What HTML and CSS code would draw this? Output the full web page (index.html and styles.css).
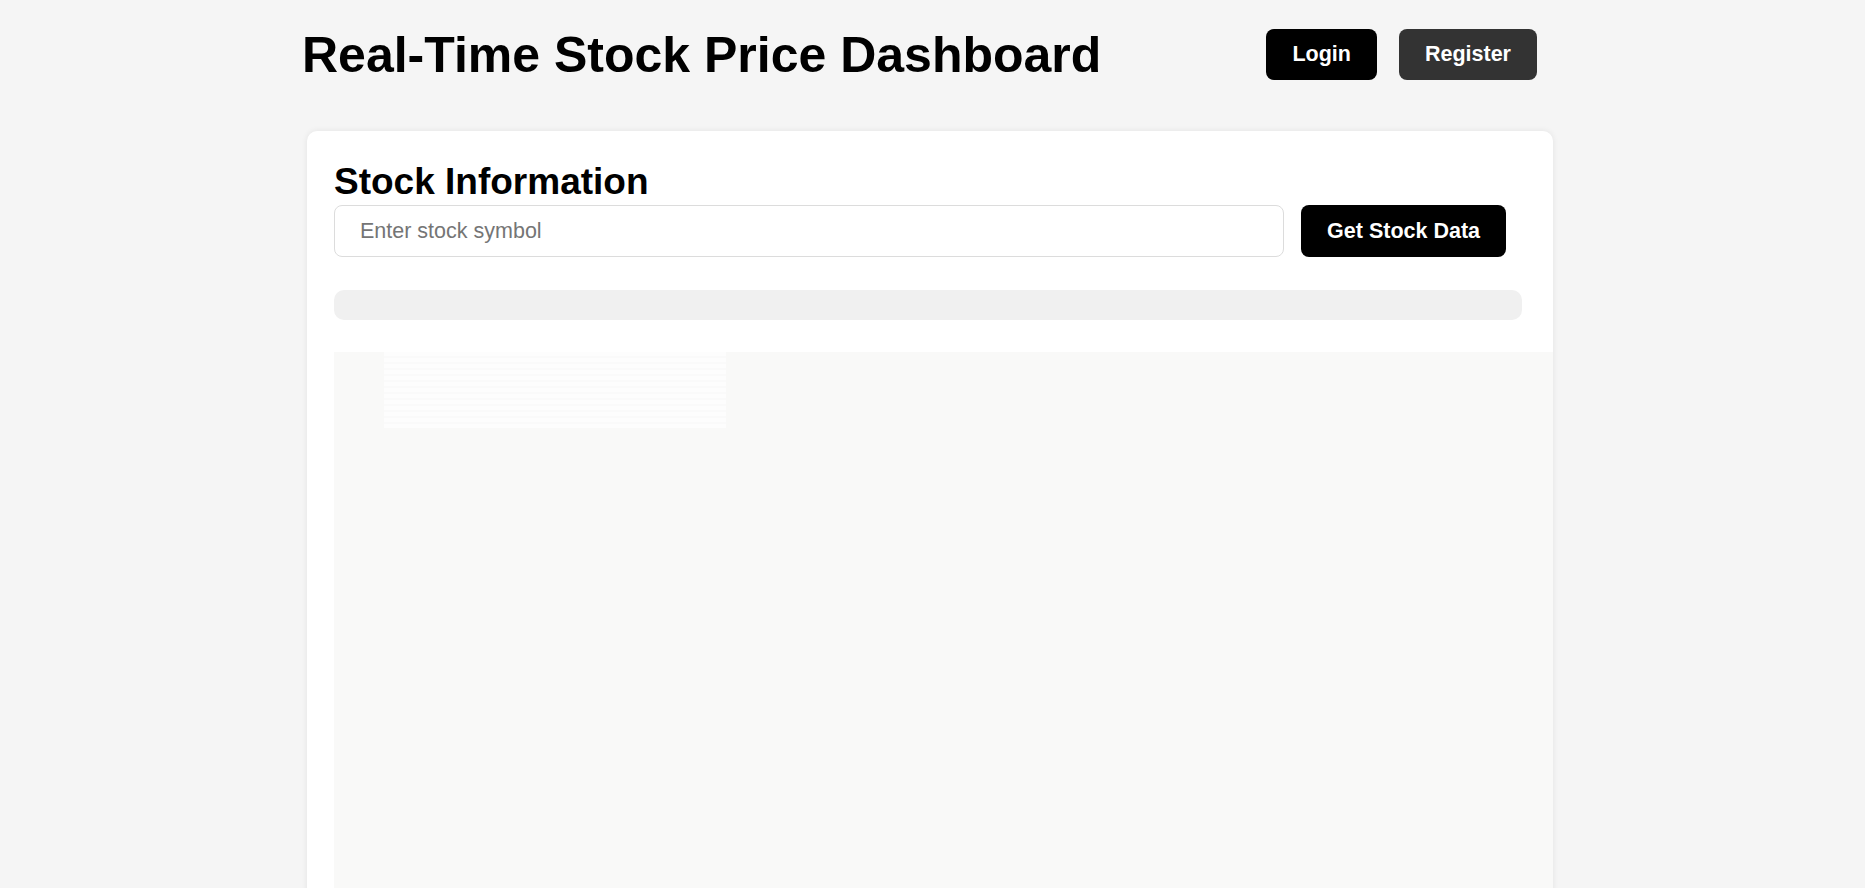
FILE: index.html
```html
<!DOCTYPE html>
<html lang="en">
<head>
<meta charset="utf-8">
<title>Real-Time Stock Price Dashboard</title>
<link rel="stylesheet" href="styles.css">
</head>
<body>
<div class="page">
  <header class="header">
    <h1 class="title">Real-Time Stock Price Dashboard</h1>
    <nav class="auth">
      <button class="btn btn-black" type="button">Login</button>
      <button class="btn btn-dark" type="button">Register</button>
    </nav>
  </header>
  <main class="card">
    <h2 class="card-title">Stock Information</h2>
    <div class="search-row">
      <input class="symbol-input" type="text" placeholder="Enter stock symbol">
      <button class="btn btn-black" type="button">Get Stock Data</button>
    </div>
    <div class="info-bar"></div>
    <div class="chart-area">
      <div class="chart-ghost"></div>
    </div>
  </main>
</div>
</body>
</html>
```

FILE: styles.css
```css
html, body {
  margin: 0;
  padding: 0;
  overflow: hidden;
}

body {
  background: #f5f5f5;
  font-family: "Liberation Sans", Arial, sans-serif;
  color: #000;
}

.page {
  width: 1246px;
  padding-right: 5px;
  margin: 0 auto;
}

.header {
  display: flex;
  align-items: center;
  justify-content: space-between;
  padding-top: 26px;
  margin: 0 16px 0 -5px;
}

.title {
  margin: 0;
  font-size: 50px;
  font-weight: bold;
  line-height: normal;
}

.auth {
  display: flex;
  gap: 22px;
  margin-bottom: 2px;
}

.btn {
  font-family: "Liberation Sans", Arial, sans-serif;
  font-size: 21.5px;
  font-weight: bold;
  line-height: normal;
  color: #fff;
  border: none;
  border-radius: 8px;
  padding: 13px 26px;
  cursor: pointer;
}

.btn-black {
  background: #000;
}

.btn-dark {
  background: #333;
}

.card {
  margin-top: 47px;
  background: #fff;
  border-radius: 10px 10px 0 0;
  box-shadow: 0 0 6px rgba(0, 0, 0, 0.08);
  padding: 30px 31px 0 27px;
}

.card-title {
  margin: 0;
  font-size: 37px;
  font-weight: bold;
  line-height: normal;
}

.search-row {
  display: flex;
  gap: 17px;
  margin-top: 2px;
  padding-right: 16px;
}

.symbol-input {
  flex: 1;
  height: 52px;
  box-sizing: border-box;
  border: 1px solid #dcdcdc;
  border-radius: 8px;
  padding: 0 25px;
  font-family: "Liberation Sans", Arial, sans-serif;
  font-size: 21.5px;
  color: #000;
  background: #fff;
  outline: none;
}

.symbol-input::placeholder {
  color: #757575;
}

.search-row .btn {
  padding: 13.5px 26px;
}

.info-bar {
  margin-top: 33px;
  height: 30px;
  border-radius: 10px;
  background: #f0f0f0;
}

.chart-area {
  margin-top: 32px;
  margin-right: -31px;
  height: 600px;
  background: #f9f9f8;
  padding-left: 50px;
}

.chart-ghost {
  width: 342px;
  height: 76px;
  background: repeating-linear-gradient(180deg, #fdfdfd 0, #fdfdfd 4px, #fafafa 4px, #fafafa 6px);
}
```
